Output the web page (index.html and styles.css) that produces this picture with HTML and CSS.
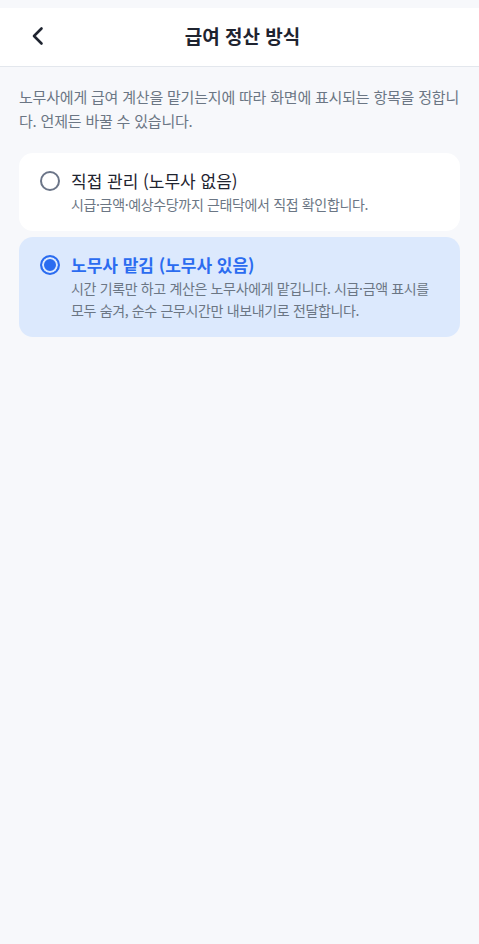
FILE: index.html
```html
<!DOCTYPE html>
<html lang="ko">
<head>
  <meta charset="UTF-8">
  <meta name="viewport" content="width=device-width, initial-scale=1">
  <title>급여 정산 방식</title>
  <link rel="stylesheet" href="styles.css">
</head>
<body>

  <div class="topbar">
    <button class="back" aria-label="뒤로">
      <svg width="24" height="24" viewBox="0 0 24 24" fill="none" stroke="#1f2430" stroke-width="2.6" stroke-linecap="round" stroke-linejoin="round">
        <path d="M15.5 4.5L8 12l7.5 7.5"/>
      </svg>
    </button>
    <h1>급여 정산 방식</h1>
  </div>

  <div class="content">
    <p class="desc">노무사에게 급여 계산을 맡기는지에 따라 화면에 표시되는 항목을 정합니다. 언제든 바꿀 수 있습니다.</p>

    <div class="options">
      <label class="option">
        <span class="radio"></span>
        <span class="text">
          <span class="title">직접 관리 (노무사 없음)</span>
          <span class="sub">시급·금액·예상수당까지 근태닥에서 직접 확인합니다.</span>
        </span>
      </label>

      <label class="option selected">
        <span class="radio"></span>
        <span class="text">
          <span class="title">노무사 맡김 (노무사 있음)</span>
          <span class="sub">시간 기록만 하고 계산은 노무사에게 맡깁니다. 시급·금액 표시를 모두 숨겨, 순수 근무시간만 내보내기로 전달합니다.</span>
        </span>
      </label>
    </div>
  </div>

</body>
</html>
```

FILE: styles.css
```css
body {
  margin: 0;
  padding-top: 8px;
  background-color: #f7f8fb;
  font-family: "Noto Sans CJK KR", "Noto Sans", sans-serif;
  min-height: 100vh;
  box-sizing: border-box;
}

.topbar {
  position: relative;
  height: 59px;
  box-sizing: border-box;
  padding-bottom: 3px;
  background-color: #fff;
  border-bottom: 1px solid #e3e7ed;
  display: flex;
  align-items: center;
  justify-content: center;
}

.back {
  position: absolute;
  left: 26px;
  top: 16px;
  width: 24px;
  height: 24px;
  padding: 0;
  border: none;
  background: none;
  cursor: pointer;
}

.topbar h1 {
  margin: 0 0 0 6px;
  font-size: 19px;
  font-weight: 700;
  color: #1f2430;
}

.content {
  padding: 18px 19px;
}

.desc {
  margin: 0;
  font-size: 15px;
  line-height: 24px;
  color: #6b7684;
  letter-spacing: -0.2px;
}

.options {
  margin-top: 20px;
  display: flex;
  flex-direction: column;
  gap: 6px;
}

.option {
  display: flex;
  align-items: flex-start;
  gap: 11px;
  padding: 16px 20px 16px 21px;
  background-color: #fff;
  border-radius: 14px;
  cursor: pointer;
}

.option.selected {
  background-color: #dce9fd;
}

.radio {
  flex: none;
  width: 20px;
  height: 20px;
  margin-top: 2px;
  box-sizing: border-box;
  border: 2px solid #6b7588;
  border-radius: 50%;
}

.option.selected .radio {
  border-color: #2b6cf0;
  background-color: #2b6cf0;
  box-shadow: inset 0 0 0 2px #dce9fd;
}

.text {
  display: flex;
  flex-direction: column;
}

.title {
  font-size: 17px;
  line-height: 24px;
  color: #1f2430;
}

.option.selected .title {
  color: #2b6cf0;
  font-weight: 700;
}

.sub {
  font-size: 14px;
  line-height: 22px;
  color: #6b7684;
  letter-spacing: -0.35px;
}
```
